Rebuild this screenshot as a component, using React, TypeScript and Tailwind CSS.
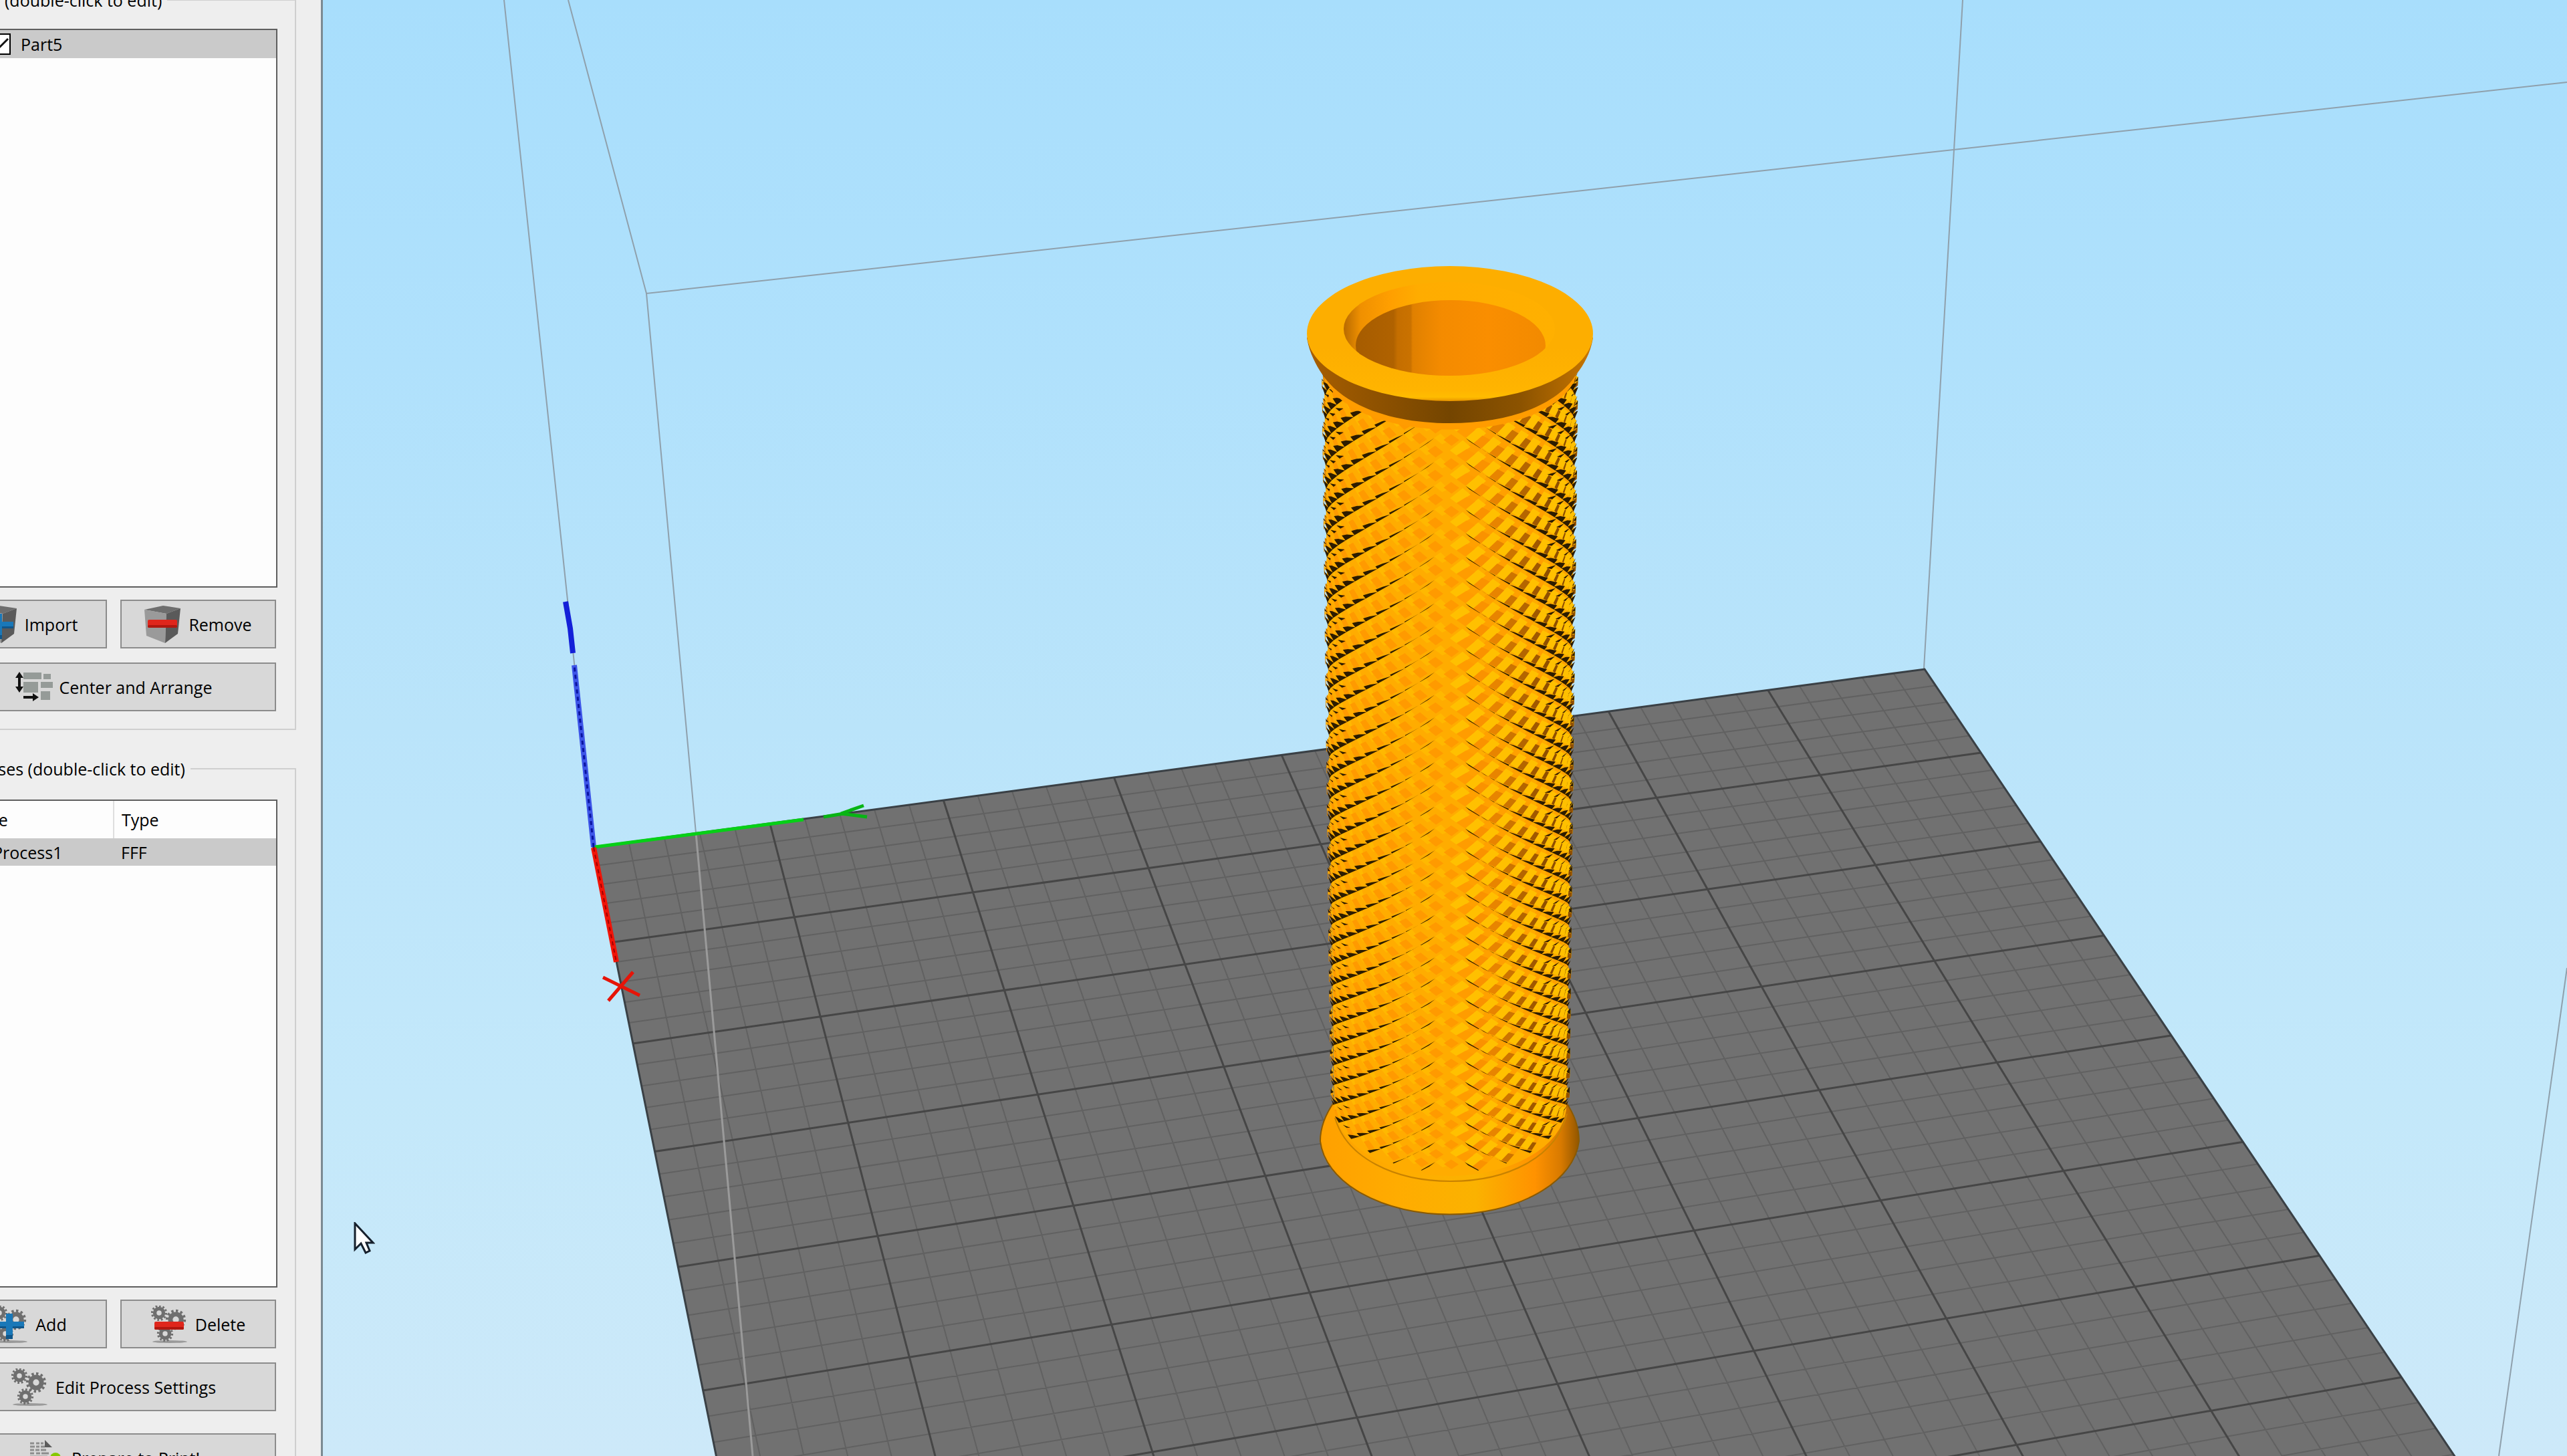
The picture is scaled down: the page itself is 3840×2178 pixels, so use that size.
import React, { useMemo, useState } from "react";

type Point = [number, number];

const lerp = (a: number, b: number, t: number) => a + (b - a) * t;

/* ------------------------------------------------------------------ */
/* Build plate                                                         */
/* ------------------------------------------------------------------ */

const BED_SIZE = 40;
const BED_DEPTH = 45;

// Plate cell coordinates -> viewport coordinates, with perspective
const projectBed = (u: number, v: number): Point => {
  const w = 0.001767 * u - 0.006005 * v + 1;
  return [(54.875 * u + 0.251 * v + 887.5) / w, (-4.881 * u + 20.03 * v + 1267) / w];
};

const linePath = (a: Point, b: Point) =>
  `M${a[0].toFixed(1)} ${a[1].toFixed(1)}L${b[0].toFixed(1)} ${b[1].toFixed(1)}`;

const buildGrid = () => {
  let minor = "";
  let major = "";
  for (let i = 1; i < BED_SIZE; i++) {
    const d = linePath(projectBed(i, 0), projectBed(i, BED_DEPTH));
    if (i % 5 === 0) major += d;
    else minor += d;
  }
  for (let j = 1; j < BED_DEPTH; j++) {
    const d = linePath(projectBed(0, j), projectBed(BED_SIZE, j));
    if (j % 5 === 0) major += d;
    else minor += d;
  }
  const outline = [
    projectBed(0, BED_DEPTH),
    projectBed(0, 0),
    projectBed(BED_SIZE, 0),
    projectBed(BED_SIZE, BED_DEPTH),
  ];
  return { minor, major, outline: outline.map((p) => p.join(",")).join(" ") };
};

function BuildPlate() {
  const grid = useMemo(buildGrid, []);
  return (
    <g fill="none">
      <polygon points={grid.outline} fill="#717171" />
      <path d={grid.minor} stroke="#616161" strokeWidth="2" />
      <path d={grid.major} stroke="#464646" strokeWidth="3" />
      <polygon points={grid.outline} stroke="#3a4045" strokeWidth="3" />
    </g>
  );
}

/* ------------------------------------------------------------------ */
/* Knurled grip                                                        */
/* ------------------------------------------------------------------ */

const AXIS_X = 2169;
const STEP = Math.PI / 25;
const GROOVE = "#2c1c00";
const BROWNS = ["#ff9c00", "#fa9200", "#e88400", "#cc7400", "#b46500", "#a05800", "#8f4f00"];

// Screen height of the front of ring n
const ringY = (n: number) => 655 + 36 * n - 0.0964 * n * n;

const surface = (theta: number, n: number, lift: number): Point => {
  const front = ringY(n);
  const t = (front - 600) / 1167;
  const rx = lerp(186, 173, t);
  const ry = lerp(86, 107, t);
  const r = 1 + lift;
  return [AXIS_X + rx * r * Math.sin(theta), front - ry + ry * r * Math.cos(theta)];
};

// p runs up and to the right through a stud, q runs down and to the right
const studPoint = (col: number, row: number, p: number, q: number): Point => {
  const theta = (col + p + q - 1) * STEP;
  const n = row + (q - p) / 2;
  const edge = Math.min(p, 1 - p, q, 1 - q);
  return surface(theta, n, edge > 0 ? 0.035 : 0.01);
};

const buildKnurl = () => {
  const layers: Record<string, string> = {};
  const add = (color: string, pts: Point[]) => {
    layers[color] =
      (layers[color] ?? "") + "M" + pts.map((p) => `${p[0].toFixed(1)} ${p[1].toFixed(1)}`).join("L") + "Z";
  };
  const quad = (color: string, col: number, row: number, p0: number, p1: number, q0: number, q1: number) =>
    add(color, [
      studPoint(col, row, p0, q0),
      studPoint(col, row, p1, q0),
      studPoint(col, row, p1, q1),
      studPoint(col, row, p0, q1),
    ]);

  for (let col = -12; col <= 12; col++) {
    const depth = Math.abs(col) / 12;
    for (let k = -3; k < 34; k++) {
      const row = k + (Math.abs(col) % 2) / 2;
      if (row > 33.2) continue;
      if (col <= 0) {
        // lit side: orange window, dark groove along the lower edge
        const w = Math.max(0, (depth - 0.1) * 0.5);
        quad("#ffb800", col, row, 0, 0.4, 0, 0.5);
        quad(depth > 0.85 ? "#e88a00" : "#ff9a00", col, row, 0.3, 0.78, 0.3, 0.8);
        if (w > 0) {
          add(GROOVE, [
            studPoint(col, row, 0, 1),
            studPoint(col, row, 0.15, 1 - w),
            studPoint(col, row, 0.65, 1 - w * 0.7),
            studPoint(col, row, 1, 1),
          ]);
        }
        if (depth > 0.6) {
          add(GROOVE, [
            studPoint(col, row, 0, 0.35),
            studPoint(col, row, 0.05, 0.15),
            studPoint(col, row, 0.8, 0.4),
          ]);
        }
      } else {
        const w = Math.max(0, (depth - 0.1) * 0.42);
        const brown = BROWNS[Math.min(6, Math.floor(depth * 11))];
        quad("#ffa000", col, row, 0.5, 1, 0.4, 1);
        quad("#ffc000", col, row, w, 0.82, 0, 0.46);
        quad(brown, col, row, w, 0.62, 0.42, 1);
        if (w > 0) {
          add(GROOVE, [
            studPoint(col, row, 0, 0),
            studPoint(col, row, w * 0.6, 0.2),
            studPoint(col, row, w, 0.85),
            studPoint(col, row, 0, 1),
          ]);
        }
        if (depth > 0.55) {
          add(GROOVE, [
            studPoint(col, row, 0.6, 0.3),
            studPoint(col, row, 0.95, 0.95),
            studPoint(col, row, 0.7, 1),
          ]);
        }
      }
    }
  }
  // grooves go on top of every facet
  const { [GROOVE]: grooves, ...facets } = layers;
  return [...Object.entries(facets), [GROOVE, grooves]];
};

function Grip() {
  const knurl = useMemo(buildKnurl, []);
  return (
    <g>
      <defs>
        <linearGradient id="base" x1="0" x2="1">
          <stop offset="0" stopColor="#ffa000" />
          <stop offset="0.3" stopColor="#ffac00" />
          <stop offset="0.6" stopColor="#fbb200" />
          <stop offset="0.83" stopColor="#ff9200" />
          <stop offset="0.93" stopColor="#d87a00" />
          <stop offset="1" stopColor="#925600" />
        </linearGradient>
        <linearGradient id="shade" x1="0" x2="1">
          <stop offset="0" stopColor="#a85e00" />
          <stop offset="0.5" stopColor="#744500" />
          <stop offset="0.75" stopColor="#8c5300" />
          <stop offset="1" stopColor="#c87600" />
        </linearGradient>
        <linearGradient id="bore" x1="0" x2="1">
          <stop offset="0" stopColor="#a65c00" />
          <stop offset="0.2" stopColor="#b06200" />
          <stop offset="0.22" stopColor="#c46e00" />
          <stop offset="0.29" stopColor="#ca7200" />
          <stop offset="0.3" stopColor="#e08000" />
          <stop offset="0.45" stopColor="#f48b00" />
          <stop offset="0.7" stopColor="#fa8e00" />
          <stop offset="1" stopColor="#f28a00" />
        </linearGradient>
        <linearGradient id="chamfer" x1="0" x2="1">
          <stop offset="0" stopColor="#b86a00" />
          <stop offset="0.08" stopColor="#f09000" />
          <stop offset="0.22" stopColor="#ff9f00" />
          <stop offset="0.35" stopColor="#ffac00" />
          <stop offset="1" stopColor="#ffb000" />
        </linearGradient>
        <linearGradient id="lip" x1="0" x2="0" y1="0" y2="1">
          <stop offset="0.6" stopColor="#fdae00" />
          <stop offset="0.92" stopColor="#ffb400" />
          <stop offset="0.97" stopColor="#ffbc00" />
          <stop offset="1" stopColor="#e89400" />
        </linearGradient>
        <clipPath id="bodyClip">
          <path d="M1970 480H2368L2348 1660A177 107 0 0 1 1991 1660Z" />
        </clipPath>
        <clipPath id="boreClip">
          <ellipse cx="2168" cy="492" rx="158" ry="70" />
        </clipPath>
      </defs>

      <path
        d="M1996 1648C1982 1668 1975 1686 1975 1707A194 118 0 0 0 2362 1707C2362 1686 2356 1668 2342 1648Z"
        fill="url(#base)"
        stroke="#8a5a00"
        strokeWidth="2"
      />

      <g clipPath="url(#bodyClip)">
        <path d="M1980 500H2358L2343 1660A174 107 0 0 1 1996 1660Z" fill="#ffac00" />
        {knurl.map(([color, d]) => (
          <path key={color} d={d} fill={color} />
        ))}
      </g>
      <path d="M1997 1672C2014 1732 2086 1767 2170 1767S2328 1732 2344 1666" fill="none" stroke="#c88200" strokeWidth="2" />

      <path d="M1980 560L2358 560A190 92 0 0 1 1980 560Z" fill="#ff9c00" />
      <path d="M1955 505C1958 526 1968 545 1978 560C2010 608 2084 633 2169 633S2328 608 2358 560C2370 545 2380 526 2383 505Z" fill="url(#shade)" />
      <ellipse cx="2169" cy="499" rx="214" ry="101" fill="url(#lip)" />
      <ellipse cx="2168" cy="492" rx="158" ry="70" fill="url(#chamfer)" />
      <g clipPath="url(#boreClip)">
        <ellipse cx="2170" cy="517" rx="142" ry="68" fill="url(#bore)" />
      </g>
    </g>
  );
}

/* ------------------------------------------------------------------ */
/* 3D viewport                                                         */
/* ------------------------------------------------------------------ */

function Viewport() {
  return (
    <svg
      className="block h-full w-full"
      viewBox="483 0 3357 2178"
      preserveAspectRatio="xMinYMin slice"
      role="img"
      aria-label="Part5"
    >
      <defs>
        <linearGradient id="sky" x1="0" x2="0" y1="0" y2="1">
          <stop offset="0" stopColor="#a8defc" />
          <stop offset="0.25" stopColor="#b0e1fc" />
          <stop offset="0.5" stopColor="#bae4fa" />
          <stop offset="0.75" stopColor="#c3e8fa" />
          <stop offset="1" stopColor="#cde9f9" />
        </linearGradient>
      </defs>
      <rect x="483" width="3357" height="2178" fill="url(#sky)" />

      {/* build volume behind the plate */}
      <g fill="none" stroke="#8fa0ac" strokeWidth="2">
        <path d="M754 0L888 1266" />
        <path d="M850 0L967 439L3840 123" />
        <path d="M2936 0L2878 1000" />
        <path d="M3840 1448L3738 2178" />
      </g>

      <BuildPlate />
      <path d="M967 439L1041 1246" fill="none" stroke="#8fa0ac" strokeWidth="2" />
      <path d="M1041 1246L1126 2178" fill="none" stroke="#9a9a9a" strokeWidth="3" />

      {/* axes */}
      <g fill="none">
        <path d="M888 1267L859 995" stroke="#3d55e8" strokeWidth="8" />
        <path d="M888 1267L859 995" stroke="#0a14a0" strokeWidth="3" strokeDasharray="6 5" />
        <path d="M857 977L853 940L846 900" stroke="#1420d8" strokeWidth="8" />
        <path d="M890 1267L1202 1226" stroke="#06d016" strokeWidth="5" />
        <path d="M1232 1222L1262 1217M1258 1217L1292 1205M1258 1217L1297 1222" stroke="#08b414" strokeWidth="5" />
        <path d="M888 1268L922 1439" stroke="#f01408" strokeWidth="8" />
        <path d="M888 1268L922 1439" stroke="#a00000" strokeWidth="2" strokeDasharray="6 5" />
        <path d="M902 1462L957 1489M947 1454L910 1497" stroke="#e61408" strokeWidth="5" />
      </g>

      <Grip />
    </svg>
  );
}

/* ------------------------------------------------------------------ */
/* Icons                                                               */
/* ------------------------------------------------------------------ */

function CubeIcon({ children }: { children?: React.ReactNode }) {
  return (
    <svg className="size-14 shrink-0" viewBox="0 0 56 56" aria-hidden="true">
      <path d="M0 6L28 0L54 4L33 12Z" fill="#6e6e6e" />
      <path d="M0 6L33 12L31 56L3 45Z" fill="#9a9a9a" />
      <path d="M54 4L33 12L31 56L50 42Z" fill="#5a5a5a" />
      {children}
    </svg>
  );
}

function Minus({ y }: { y: number }) {
  return (
    <>
      <rect x="5" y={y} width="44" height="12" rx="2" fill="#e0261c" />
      <rect x="5" y={y + 8} width="44" height="4" rx="2" fill="#b01810" />
    </>
  );
}

function Plus() {
  return (
    <>
      <path d="M22 12H32V24H49V34H32V50H22V34H4V24H22Z" fill="#1a78b8" />
      <path d="M22 44H32V50H22ZM4 31H22V34H4ZM32 31H49V34H32Z" fill="#10568a" />
    </>
  );
}

function Gear({ cx, cy, r }: { cx: number; cy: number; r: number }) {
  return (
    <g fill="none" stroke="#6e6e6e">
      <circle cx={cx} cy={cy} r={r * 0.54} strokeWidth={r * 0.46} />
      <circle cx={cx} cy={cy} r={r * 0.88} strokeWidth={r * 0.26} pathLength="24" strokeDasharray="1 1" />
    </g>
  );
}

function GearsIcon({ children }: { children?: React.ReactNode }) {
  return (
    <svg className="size-14 shrink-0" viewBox="0 0 56 56" aria-hidden="true">
      <ellipse cx="28" cy="54" rx="26" ry="2" fill="#9a9a9a" />
      <Gear cx={12} cy={11} r={12} />
      <Gear cx={37} cy={21} r={15} />
      <Gear cx={21} cy={42} r={12} />
      {children}
    </svg>
  );
}

function ArrangeIcon() {
  return (
    <svg className="size-14 shrink-0" viewBox="0 0 56 56" aria-hidden="true">
      <g fill="#959b98">
        <rect x="12" y="6" width="27" height="10" />
        <rect x="42" y="8" width="11" height="8" />
        <rect x="12" y="20" width="22" height="16" />
        <rect x="38" y="20" width="19" height="9" />
        <rect x="38" y="34" width="14" height="13" />
      </g>
      <path d="M6 5L12 14H8V27H12L6 36L0 27H4V14H0Z" fill="#111" />
      <path d="M12 41H26V37L35 43L26 49V45H12Z" fill="#111" />
    </svg>
  );
}

function PrintIcon() {
  return (
    <svg className="size-14 shrink-0" viewBox="0 0 56 56" aria-hidden="true">
      <path d="M4 6H10M13 6H18M20 6H24M4 11H11M13 11H18M20 11H26M4 16H10M12 16H18M20 16H28M4 21H10M13 21H19M21 21H32M4 26H30M4 31H26" stroke="#8d8d8d" strokeWidth="3" />
      <path d="M26 1L37 12H26Z" fill="#5c5c5c" />
      <circle cx="42" cy="28" r="8" fill="#86c800" />
    </svg>
  );
}

/* ------------------------------------------------------------------ */
/* Side panel                                                          */
/* ------------------------------------------------------------------ */

interface PanelButtonProps {
  icon: React.ReactNode;
  label: string;
}

function PanelButton({ icon, label }: PanelButtonProps) {
  return (
    <button className="flex h-[73px] min-w-0 flex-1 items-center justify-center gap-[10px] border-2 border-[#8c8c8c] bg-[#d8d8d8] whitespace-nowrap">
      {icon}
      <span>{label}</span>
    </button>
  );
}

function ModelsGroup() {
  const [visible, setVisible] = useState(true);
  return (
    <fieldset className="border-2 border-[#cfcfcf] px-[26px] pt-[25px] pb-[26px]">
      <legend className="ml-[74px] px-2">(double-click to edit)</legend>
      <div className="h-[836px] border-2 border-[#5e5e5e] bg-[#fdfdfd]">
        <label className="flex h-[42px] items-center gap-[15px] bg-[#cacaca] pl-[57px]">
          <span className="relative flex">
            <input
              type="checkbox"
              checked={visible}
              onChange={(e) => setVisible(e.target.checked)}
              className="size-8 appearance-none border-2 border-black bg-white"
            />
            {visible && (
              <svg className="pointer-events-none absolute inset-0" viewBox="0 0 32 32" aria-hidden="true">
                <path d="M5 15L12 24L28 8" fill="none" stroke="#111" strokeWidth="3" />
              </svg>
            )}
          </span>
          Part5
        </label>
      </div>
      <div className="mt-[18px] flex flex-col gap-[21px] px-[2px]">
        <div className="flex gap-5">
          <PanelButton icon={<CubeIcon><Plus /></CubeIcon>} label="Import" />
          <PanelButton icon={<CubeIcon><Minus y={21} /></CubeIcon>} label="Remove" />
        </div>
        <div className="flex">
          <PanelButton icon={<ArrangeIcon />} label="Center and Arrange" />
        </div>
      </div>
    </fieldset>
  );
}

function ProcessesGroup() {
  return (
    <fieldset className="border-2 border-[#cfcfcf] px-[26px] pt-[28px] pb-[26px]">
      <legend className="-ml-[14px] px-2">Processes (double-click to edit)</legend>
      <div className="h-[730px] border-2 border-[#5e5e5e] bg-[#fdfdfd]">
        <table className="w-full table-fixed border-collapse text-left">
          <thead>
            <tr className="h-[56px]">
              <th className="w-1/2 border-r-2 border-[#dedede] pl-[15px] font-normal">Name</th>
              <th className="pl-[11px] font-normal">Type</th>
            </tr>
          </thead>
          <tbody>
            <tr className="h-[41px] bg-[#cacaca]">
              <td className="pl-[62px]">Process1</td>
              <td className="pl-[11px]">FFF</td>
            </tr>
          </tbody>
        </table>
      </div>
      <div className="mt-[18px] flex flex-col gap-[21px] px-[2px]">
        <div className="flex gap-5">
          <PanelButton icon={<GearsIcon><Plus /></GearsIcon>} label="Add" />
          <PanelButton icon={<GearsIcon><Minus y={24} /></GearsIcon>} label="Delete" />
        </div>
        <div className="flex">
          <PanelButton icon={<GearsIcon />} label="Edit Process Settings" />
        </div>
        <div className="mt-3 flex">
          <PanelButton icon={<PrintIcon />} label="Prepare to Print!" />
        </div>
      </div>
    </fieldset>
  );
}

export default function App() {
  return (
    <div className="relative flex h-screen overflow-hidden bg-[#eeeeee] font-['Open_Sans','Noto_Sans',sans-serif] text-[25px] leading-9 text-black">
      <aside className="w-[483px] shrink-0 overflow-hidden border-r-3 border-[#7b8a92]">
        <div className="-mt-[18px] -ml-[103px] flex w-[546px] flex-col gap-10">
          <ModelsGroup />
          <ProcessesGroup />
        </div>
      </aside>
      <main className="min-w-0 flex-1">
        <Viewport />
      </main>

      {/* mouse pointer */}
      <svg className="pointer-events-none absolute top-[1828px] left-[529px] h-[48px] w-[32px]" viewBox="0 0 32 48" aria-hidden="true">
        <path d="M2 2V41L11 32L18 46L24 43L19 31H29Z" fill="#fff" stroke="#16202c" strokeWidth="3" />
      </svg>
    </div>
  );
}
